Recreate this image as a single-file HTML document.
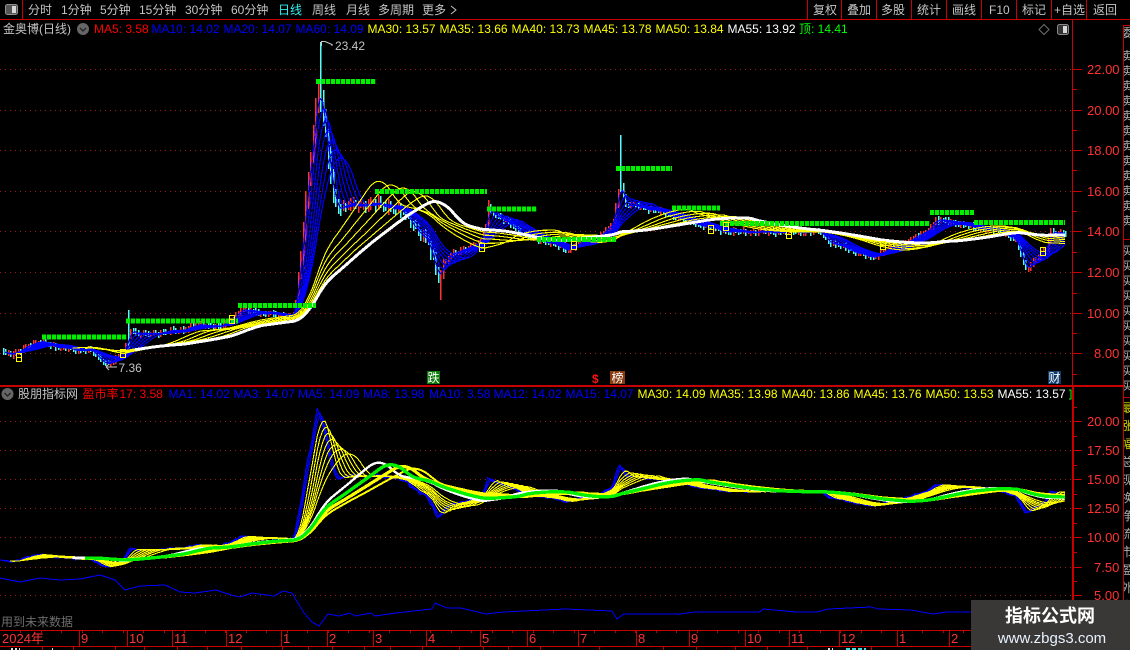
<!DOCTYPE html>
<html><head><meta charset="utf-8"><title>金奥博</title>
<style>
html,body{margin:0;padding:0;background:#000;width:1130px;height:650px;overflow:hidden}
svg{display:block}
text{font-family:"Liberation Sans","Noto Sans CJK SC",sans-serif;font-size:12px}
.g{fill:#c4c4c4}.r{fill:#ff0000}.b{fill:#0000ff}.y{fill:#ffff00}.w{fill:#ffffff}
.ax{fill:#ff3333;font-size:13px}
.dt{fill:#ff3333;font-size:13px}
</style></head><body>
<svg id="s" xmlns="http://www.w3.org/2000/svg" width="1130" height="650" viewBox="0 0 1130 650">
<defs>
<clipPath id="cu"><rect x="0" y="38" width="1072" height="347"/></clipPath>
<clipPath id="cl"><rect x="0" y="404" width="1072" height="226"/></clipPath>
<clipPath id="cr"><rect x="1124" y="26" width="6" height="624"/></clipPath>
</defs>
<g id="grid" stroke="#9a1c1c" stroke-width="1" stroke-dasharray="1 4" shape-rendering="crispEdges">
<path d="M0 69.5H1072M0 110.5H1072M0 150.5H1072M0 191.5H1072M0 231.5H1072M0 272.5H1072M0 313.5H1072M0 353.5H1072"/>
<path d="M0 421.5H1072M0 450.5H1072M0 479.5H1072M0 508.5H1072M0 537.5H1072M0 567.5H1072M0 595.5H1072"/>
</g>
<g id="upper" clip-path="url(#cu)"></g>
<g id="lower" clip-path="url(#cl)"></g>

<!-- frame -->
<g stroke="#c80000" fill="none" shape-rendering="crispEdges">
<path d="M0 19.5H1130M22.5 0V19M807.5 0V19M841.5 0V19M876.5 0V19M911.5 0V19M946.5 0V19M981.5 0V19M1016.5 0V19M1051.5 0V19M1086.5 0V19"/>
<path d="M1072.5 20V385M1123.5 25V650M1123 25.5H1130M1123 239.5H1130M1123 397.5H1130"/>
<path stroke-width="2" d="M0 386H1123M1073 386V630"/>
<path d="M0 630.5H1130M0 646.5H1130"/>
<path d="M79.5 630V646M127.5 630V646M172.5 630V646M226.5 630V646M281.5 630V646M327.5 630V646M373.5 630V646M426.5 630V646M480.5 630V646M527.5 630V646M578.5 630V646M636.5 630V646M689.5 630V646M745.5 630V646M789.5 630V646M839.5 630V646M897.5 630V646M949.5 630V646"/>
<path d="M42.5 646V650M73.5 646V650M115.5 646V650M144.5 646V650M177.5 646V650M207.5 646V650M241.5 646V650M282.5 646V650M308.5 646V650M332.5 646V650M364.5 646V650M390.5 646V650M422.5 646V650M459.5 646V650M483.5 646V650M508.5 646V650M540.5 646V650M599.5 646V650M663.5 646V650M696.5 646V650M735.5 646V650M767.5 646V650M807.5 646V650M871.5 646V650"/>
<path id="ticks" d=""/>
<path d="M1073 69.5H1082M1073 110.5H1082M1073 150.5H1082M1073 191.5H1082M1073 231.5H1082M1073 272.5H1082M1073 313.5H1082M1073 353.5H1082M1073 89.5H1077M1073 130.5H1077M1073 170.5H1077M1073 211.5H1077M1073 252.5H1077M1073 293.5H1077M1073 333.5H1077M1073 374.5H1077"/>
<path d="M1073 421.5H1082M1073 450.5H1082M1073 479.5H1082M1073 508.5H1082M1073 537.5H1082M1073 567.5H1082M1073 595.5H1082M1073 407.5H1077M1073 436.5H1077M1073 465.5H1077M1073 494.5H1077M1073 523.5H1077M1073 552.5H1077M1073 581.5H1077"/>
</g>

<!-- top-left icon -->
<rect x="5.5" y="4.5" width="12" height="10" rx="2" fill="#555" stroke="#909090"/>
<rect x="12" y="6" width="4" height="7" fill="#d8d8d8"/>

<!-- toolbar -->
<text class="g" x="28" y="14">分时</text>
<text class="g" x="61" y="14">1分钟</text>
<text class="g" x="100" y="14">5分钟</text>
<text class="g" x="139" y="14">15分钟</text>
<text class="g" x="185" y="14">30分钟</text>
<text class="g" x="231" y="14">60分钟</text>
<text x="278" y="14" fill="#33f0f0">日线</text>
<text class="g" x="312" y="14">周线</text>
<text class="g" x="346" y="14">月线</text>
<text class="g" x="378" y="14">多周期</text>
<text class="g" x="422" y="14">更多</text>
<path d="M451 6l5 4-5 4" fill="none" stroke="#c4c4c4"/>
<text class="g" x="813" y="14">复权</text>
<text class="g" x="847" y="14">叠加</text>
<text class="g" x="881" y="14">多股</text>
<text class="g" x="917" y="14">统计</text>
<text class="g" x="952" y="14">画线</text>
<text class="g" x="989" y="14">F10</text>
<text class="g" x="1022" y="14">标记</text>
<text class="g" x="1054" y="14">+自选</text>
<text class="g" x="1093" y="14">返回</text>

<!-- upper legend -->
<text class="g" x="3" y="33">金奥博(日线)</text>
<circle cx="83" cy="29" r="6" fill="#666"/><path d="M80 28l3 3 3-3" fill="none" stroke="#222" stroke-width="1.3"/>
<text class="r" x="94" y="33">MA5: 3.58</text>
<text class="b" x="151.500" y="33">MA10: 14.02</text>
<text class="b" x="223.500" y="33">MA20: 14.07</text>
<text class="b" x="295.500" y="33">MA60: 14.09</text>
<text class="y" x="367.500" y="33">MA30: 13.57</text>
<text class="y" x="439.500" y="33">MA35: 13.66</text>
<text class="y" x="511.500" y="33">MA40: 13.73</text>
<text class="y" x="583.500" y="33">MA45: 13.78</text>
<text class="y" x="655.500" y="33">MA50: 13.84</text>
<text class="w" x="727.500" y="33">MA55: 13.92</text>
<text x="799" y="33" fill="#00ff00">顶: 14.41</text>
<path d="M1044 24.500l5 5-5 5-5-5z" fill="none" stroke="#707070"/>
<rect x="1057.500" y="24.500" width="11" height="10" rx="2" fill="#333" stroke="#8a8a8a"/>
<rect x="1063" y="26" width="4" height="7" fill="#d8d8d8"/>

<!-- lower legend -->
<circle cx="7.500" cy="394" r="6" fill="#666"/><path d="M4.500 393l3 3 3-3" fill="none" stroke="#222" stroke-width="1.3"/>
<text class="g" x="18" y="398">股朋指标网</text>
<text class="r" x="82.500" y="398">盈市率</text>
<text class="r" x="119.500" y="398">17: 3.58</text>
<text class="b" x="168.500" y="398">MA1: 14.02</text>
<text class="b" x="233.500" y="398">MA3: 14.07</text>
<text class="b" x="298" y="398">MA5: 14.09</text>
<text class="b" x="363" y="398">MA8: 13.98</text>
<text class="b" x="429" y="398">MA10: 3.58</text>
<text class="b" x="493.500" y="398">MA12: 14.02</text>
<text class="b" x="565.500" y="398">MA15: 14.07</text>
<text class="y" x="637.500" y="398">MA30: 14.09</text>
<text class="y" x="709.500" y="398">MA35: 13.98</text>
<text class="y" x="781.500" y="398">MA40: 13.86</text>
<text class="y" x="853.500" y="398">MA45: 13.76</text>
<text class="y" x="925.500" y="398">MA50: 13.53</text>
<text class="w" x="997.500" y="398">MA55: 13.57</text>
<path d="M1069 390h2v9h-2" fill="none" stroke="#00ff00"/>

<!-- markers -->
<text class="g" x="335" y="50">23.42</text>
<text class="g" x="118.500" y="372">7.36</text>
<rect x="427" y="371" width="13" height="13" fill="#0b7a0b"/><text class="w" x="427.500" y="382">跌</text>
<text x="592" y="383" fill="#ff1010" font-weight="bold" style="font-size:12px">$</text>
<rect x="610" y="371" width="15" height="13" fill="#8a3c10"/><text class="w" x="611.500" y="382">榜</text>
<rect x="1048" y="371" width="13" height="13" fill="#103a6a"/><text class="w" x="1048.500" y="382">财</text>
<text x="1" y="626" fill="#6e6e6e">用到未来数据</text>

<!-- y axis -->
<text class="ax" x="1087" y="74">22.00</text>
<text class="ax" x="1087" y="115">20.00</text>
<text class="ax" x="1087" y="155">18.00</text>
<text class="ax" x="1087" y="196">16.00</text>
<text class="ax" x="1087" y="236">14.00</text>
<text class="ax" x="1087" y="277">12.00</text>
<text class="ax" x="1087" y="318">10.00</text>
<text class="ax" x="1094" y="358">8.00</text>
<text class="ax" x="1087" y="426">20.00</text>
<text class="ax" x="1087" y="455">17.50</text>
<text class="ax" x="1087" y="484">15.00</text>
<text class="ax" x="1087" y="513">12.50</text>
<text class="ax" x="1087" y="542">10.00</text>
<text class="ax" x="1094" y="572">7.50</text>
<text class="ax" x="1094" y="600">5.00</text>

<!-- date axis -->
<text class="dt" x="2" y="643">2024年</text>
<text class="dt" x="81" y="643">9</text><text class="dt" x="129" y="643">10</text><text class="dt" x="174" y="643">11</text><text class="dt" x="228" y="643">12</text><text class="dt" x="283" y="643">1</text><text class="dt" x="329" y="643">2</text><text class="dt" x="375" y="643">3</text><text class="dt" x="428" y="643">4</text><text class="dt" x="482" y="643">5</text><text class="dt" x="529" y="643">6</text><text class="dt" x="580" y="643">7</text><text class="dt" x="638" y="643">8</text><text class="dt" x="691" y="643">9</text><text class="dt" x="747" y="643">10</text><text class="dt" x="791" y="643">11</text><text class="dt" x="841" y="643">12</text><text class="dt" x="899" y="643">1</text><text class="dt" x="951" y="643">2</text>

<!-- right clipped column -->
<g clip-path="url(#cr)" fill="#b0b0b0">
<text x="1121" y="37" fill="#b0b0b0">委</text><text x="1121" y="60">卖</text><text x="1121" y="75">卖</text><text x="1121" y="90">卖</text><text x="1121" y="105">卖</text><text x="1121" y="120">卖</text><text x="1121" y="135">卖</text><text x="1121" y="150">卖</text><text x="1121" y="165">卖</text><text x="1121" y="180">卖</text><text x="1121" y="195">卖</text><text x="1121" y="210">卖</text><text x="1121" y="225">卖</text>
<text x="1121" y="255">买</text><text x="1121" y="270">买</text><text x="1121" y="285">买</text><text x="1121" y="300">买</text><text x="1121" y="315">买</text><text x="1121" y="330">买</text><text x="1121" y="345">买</text><text x="1121" y="360">买</text><text x="1121" y="375">买</text><text x="1121" y="390">买</text>
<text x="1121" y="412" fill="#d8d800">最</text><text x="1121" y="430" fill="#d8d800">涨</text><text x="1121" y="448" fill="#d8d800">幅</text><text x="1121" y="466">总</text><text x="1121" y="484">现</text><text x="1121" y="502">换</text><text x="1121" y="520">净</text><text x="1121" y="538">流</text><text x="1121" y="556">市</text><text x="1121" y="574">盈</text><text x="1121" y="592">外</text><text x="1121" y="610">内</text>
</g>

<!-- bottom fragments -->
<path d="M11 649h9M52 649h1" stroke="#e0e0e0" stroke-width="2" stroke-dasharray="2 2"/>
<path d="M828 649h5" stroke="#e0e0e0" stroke-width="2" stroke-dasharray="2 2"/>
<path d="M846 649h20" stroke="#40e0e0" stroke-width="2" stroke-dasharray="4 2"/>

<!-- watermark -->
<rect x="971" y="600" width="159" height="50" fill="#3a3836"/>
<text x="1050" y="622" text-anchor="middle" fill="#fff" font-weight="bold" style="font-size:18px">指标公式网</text>
<text x="1052" y="643" text-anchor="middle" fill="#e8f2ff" style="font-size:15px">www.zbgs3.com</text>
<g id="over" fill="none" stroke="#c4c4c4">
<path d="M321.500 46V41.500H325M325 41.500l7 3M333 45h-2"/>
<path d="M106 367H117M106 367l3-3M106 367l3 3"/>
</g>
</svg>
<script>
(function(){
var NS="http://www.w3.org/2000/svg";
var ctrl=[[0,350],[10,355],[17,353],[27,345],[40,342],[57,347],[73,350],[90,350],[97,358],[107,364],[118,358],[126,345],[129,328],[137,335],[157,333],[167,332],[180,330],[200,325],[220,327],[230,320],[240,310],[260,313],[277,315],[292,316],[296,300],[300,260],[308,170],[313,127],[318,82],[323,125],[327,155],[333,198],[338,208],[347,206],[363,204],[380,205],[393,207],[407,217],[417,230],[427,243],[433,262],[437,277],[441,268],[447,257],[467,247],[480,243],[485,225],[487,207],[497,217],[510,225],[530,238],[550,243],[565,250],[580,243],[600,235],[612,225],[616,200],[619,180],[625,205],[640,207],[660,212],[690,222],[710,228],[730,232],[760,232],[790,232],[820,232],[830,243],[850,250],[870,258],[890,248],[910,240],[925,232],[935,220],[950,222],[975,228],[1000,231],[1015,240],[1020,255],[1025,270],[1035,258],[1045,250],[1050,232],[1065,233]];
function interp(x){for(var k=0;k<ctrl.length-1;k++){var a=ctrl[k],b=ctrl[k+1];if(x>=a[0]&&x<=b[0])return a[1]+(b[1]-a[1])*(x-a[0])/(b[0]-a[0]);}return ctrl[ctrl.length-1][1];}
var step=2.5,n=Math.floor(1065/step)+1,Y=[],X=[];
function nz(i){return Math.sin(i*1.73)*1.1+Math.sin(i*0.61+1)*0.9+Math.sin(i*3.1+2)*0.6;}
function volat(x){if(x>295&&x<335)return 7;if(x>=335&&x<445)return 3.2;return 1.4;}
for(var i=0;i<n;i++){var x=i*step;X.push(x);Y.push(interp(x)+nz(i)*volat(x)*0.6);}
function p(y){return 14+(231-y)/20.3;}
var P=Y.map(p);
function yU(v){return 231-(v-14)*20.3;}
function yL(v){return 479.5-(v-15)*11.6;}
function ma(w){var o=[],s=0;for(var i=0;i<n;i++){s+=P[i];if(i>=w)s-=P[i-w];o.push(i>=w-1?s/w:null);}return o;}
function line(g,w,fn,color,sw){var m=ma(w),pts=[];for(var i=0;i<n;i++)if(m[i]!==null)pts.push(X[i].toFixed(1)+","+fn(m[i]).toFixed(1));
var e=document.createElementNS(NS,"polyline");e.setAttribute("points",pts.join(" "));e.setAttribute("fill","none");e.setAttribute("stroke",color);e.setAttribute("stroke-width",sw);e.setAttribute("shape-rendering","crispEdges");g.appendChild(e);}
var U=document.getElementById("upper"),L=document.getElementById("lower");
var cp={red:"",cy:""};
for(var i=1;i<n;i++){var x=Math.round(X[i])+0.5,c=Y[i],o=Y[i-1],v=volat(X[i]);
var hi=Math.min(c,o)-Math.abs(Math.sin(i*2.3))*v*1.6-1,lo=Math.max(c,o)+Math.abs(Math.sin(i*1.3+1))*v*1.6+1;
if(Math.abs(X[i]-320)<1.3)hi=42;
if(Math.abs(X[i]-620)<1.3)hi=135;
if(Math.abs(X[i]-127.5)<1.3)hi=310;
if(Math.abs(X[i]-440)<1.3)lo=300;
if(Math.abs(X[i]-487.5)<1.3)hi=200;
var up=c<o;if(X[i]===320||X[i]===620||X[i]===127.5)up=false;if(X[i]===440)up=true;
var d="M"+x+" "+hi.toFixed(0)+"V"+lo.toFixed(0);
if(up)cp.red+=d;else cp.cy+=d;}
[[cp.red,"#ff3232"],[cp.cy,"#54fcfc"]].forEach(function(a){var e=document.createElementNS(NS,"path");e.setAttribute("d",a[0]);e.setAttribute("stroke",a[1]);e.setAttribute("stroke-width","1.5");e.setAttribute("fill","none");e.setAttribute("shape-rendering","crispEdges");U.appendChild(e);});
[3,5,7,9,11,13,15].forEach(function(w){line(U,w,yU,"#0000ff",1.2);});
[30,35,40,45,50].forEach(function(w){line(U,w,yU,"#ffff00",1.1);});
line(U,55,yU,"#ffffff",3);
var segs=[[337,42,127],[321,126,238],[305.5,238,316],[81.5,316,376],[191.5,375,487],[209,487,537],[239.5,537,616],[168.5,616,672],[208,672,720],[223.5,720,930],[212.5,930,974],[222.5,974,1065]];
segs.forEach(function(s){var e=document.createElementNS(NS,"path");e.setAttribute("d","M"+s[1]+" "+s[0]+"H"+s[2]);e.setAttribute("stroke","#00f000");e.setAttribute("stroke-width","5");e.setAttribute("stroke-dasharray","4.2 .8");e.setAttribute("fill","none");U.appendChild(e);});
[[18,357],[122,353],[231,319],[481,247],[573,245],[710,229],[725,226],[788,234],[882,245],[1042,251]].forEach(function(b){var e=document.createElementNS(NS,"path");var x=b[0]-2.5,y=b[1]-4;x=Math.round(x)+.5;y=Math.round(y)+.5;e.setAttribute("d","M"+x+" "+y+"h5v8h-5zM"+x+" "+(y+4)+"h5");e.setAttribute("fill","none");e.setAttribute("stroke","#ffff00");e.setAttribute("shape-rendering","crispEdges");U.appendChild(e);});
[1,2,3].forEach(function(w){line(L,w,yL,"#0000ff",1);});
[5,7,9,11,13,15,18].forEach(function(w){line(L,w,yL,"#ffff00",1.1);});
line(L,45,yL,"#ffff00",2);
line(L,30,yL,"#ffffff",2.4);
line(L,40,yL,"#ffff00",3.2);
line(L,35,yL,"#00f000",3.4);
var r=[[0,578],[20,582],[40,578],[60,580],[80,579],[100,575],[115,580],[125,590],[140,586],[165,585],[180,592],[195,593],[216,590],[231,595],[240,597],[252,593],[274,596],[283,591],[292,593],[304,613],[312,622],[319,626],[328,614],[339,616],[350,613],[355,616],[371,613],[375,616],[396,613],[422,610],[432,609],[435,603],[447,608],[461,608],[486,614],[504,612],[565,609],[612,611],[617,619],[624,614],[648,614],[680,614],[695,612],[760,612],[763,609],[796,612],[817,612],[828,609],[871,607],[878,609],[911,610],[933,614],[947,612],[971,612]];
var e=document.createElementNS(NS,"polyline");e.setAttribute("points",r.map(function(a){return a.join(",");}).join(" "));e.setAttribute("fill","none");e.setAttribute("stroke","#0000ff");e.setAttribute("stroke-width","1");e.setAttribute("shape-rendering","crispEdges");
document.getElementById("s").insertBefore(e,document.getElementById("lower"));
var t="";for(var x=20;x<971;x+=20.5){t+="M"+(Math.round(x)+.5)+" 630V633";}
document.getElementById("ticks").setAttribute("d",t);
})();
</script>
</body></html>
